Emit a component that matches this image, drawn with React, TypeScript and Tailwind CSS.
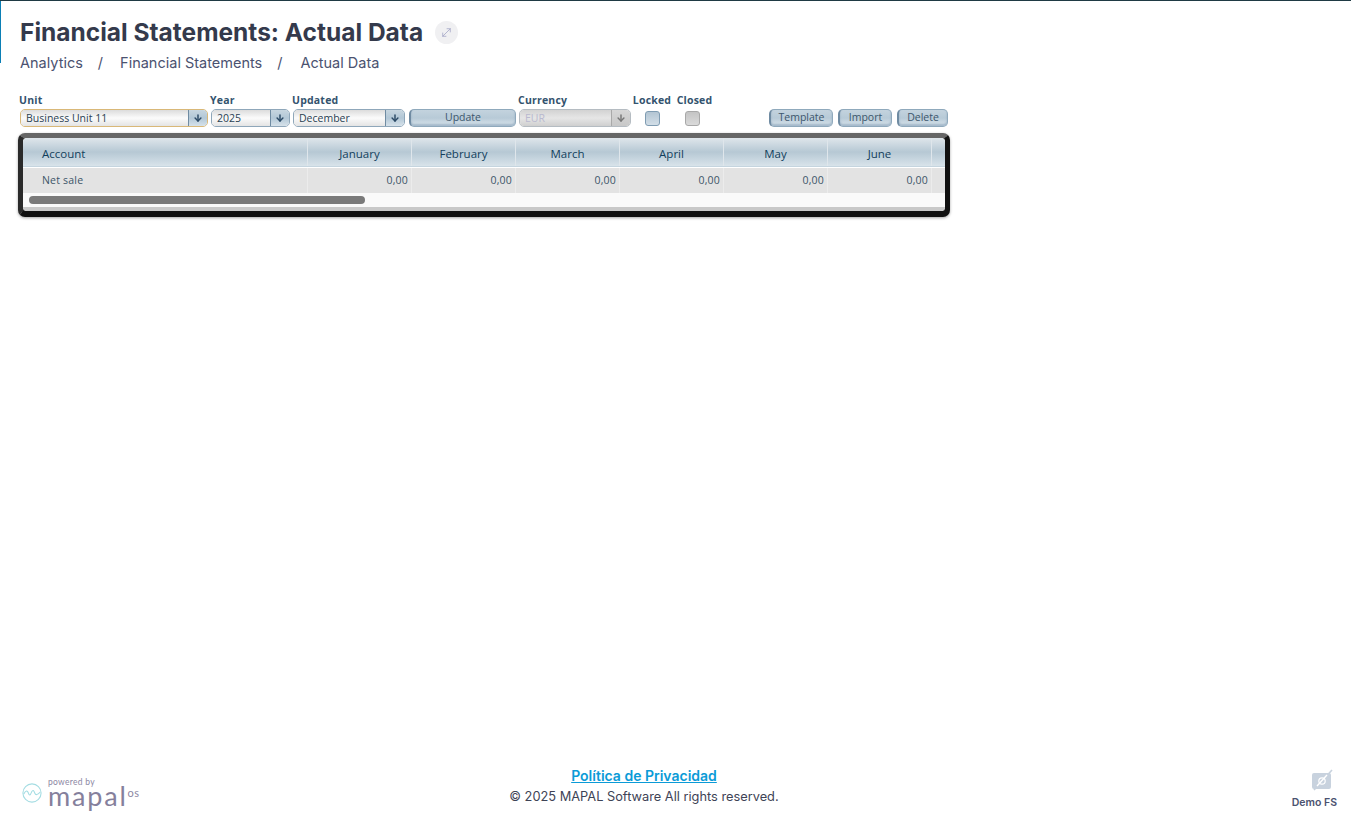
import { ArrowDown, MoveDiagonal } from 'lucide-react'

const months = ['January', 'February', 'March', 'April', 'May', 'June']

const Field = ({ label, width, value, disabled, focused }: { label: string; width: string; value: string; disabled?: boolean; focused?: boolean }) => (
    <div className={`flex flex-col ${width}`}>
        <span className="h-[15px] text-[10.5px] leading-[13px] font-bold tracking-[0.2px] text-[#33536e] -ml-px">{label}</span>
        <div className={`flex h-[18px] rounded-[5px] border overflow-hidden ${focused ? 'border-[#d9b878]' : disabled ? 'border-[#b5bcc2]' : 'border-[#8fa7ba]'}`}>
            <div className={`flex-1 pl-[5px] text-[10.5px] leading-[17px] ${disabled ? 'text-[#b9b9cf] bg-gradient-to-b from-[#d2d2d2] via-[#e6e6e6] to-[#cfcfcf]' : 'text-[#2a3f52] bg-gradient-to-b from-[#dcdcdc] via-[#fbfbfb] to-[#e4e4e4]'}`}>{value}</div>
            <div className={`w-[19px] flex items-center justify-center border-l ${disabled ? 'border-[#a9a9a9] bg-gradient-to-b from-[#d6d6d6] to-[#c8c8c8] text-[#777]' : 'border-[#6f8ba2] bg-gradient-to-b from-[#c7d6e0] via-[#b2c7d6] to-[#d6e2ea] text-[#2b4a66]'}`}>
                <ArrowDown size={10} strokeWidth={3.5} />
            </div>
        </div>
    </div>
)

const Btn = ({ children, width }: { children: string; width: string }) => (
    <button className={`${width} h-[18px] rounded-[5px] border border-[#8fa9bc] border-l-[2px] border-l-[#6f8ba2] bg-gradient-to-b from-[#c3d3de] via-[#b7cad7] to-[#dce6ed] shadow-[inset_0_-2px_2px_rgba(120,150,175,0.55)] text-[10.5px] leading-[14px] pb-[2px] text-[#3c566c]`}>
        {children}
    </button>
)

const Check = ({ gray }: { gray?: boolean }) => (
    <div className={`w-[15px] h-[15px] mb-px rounded-[3px] border ${gray ? 'border-[#a8a8a8] bg-gradient-to-b from-[#c4c4c4] to-[#dadada]' : 'border-[#7f9cb2] bg-gradient-to-b from-[#b3c5d3] to-[#d2dee7]'}`} />
)

const App = () => {
    return (
        <div className="relative flex flex-col h-[813px] bg-white border-t border-[#1f3a44] font-['Open_Sans',sans-serif] overflow-hidden">
            <div className="absolute left-0 top-0 w-px h-[62px] bg-[#0b7fb5]" />

            <div className="pl-5 pt-[15px]">
                <div className="flex items-center h-[32px]">
                    <h1 className="font-['Inter',sans-serif] font-bold text-[24.5px] text-[#343a4c]">Financial Statements: Actual Data</h1>
                    <div className="ml-3 w-[23px] h-[23px] rounded-full bg-[#f0f0f2] flex items-center justify-center text-[#a5a8c8]">
                        <MoveDiagonal size={13} strokeWidth={1.5} />
                    </div>
                </div>
                <div className="flex items-center mt-[3px] h-[24px] font-['Inter',sans-serif] text-[14.5px] text-[#4b5270]">
                    <span>Analytics</span>
                    <span className="ml-[15px] mr-[17px]">/</span>
                    <span>Financial Statements</span>
                    <span className="ml-[15px] mr-[18px]">/</span>
                    <span>Actual Data</span>
                </div>
            </div>

            <div className="flex items-end pl-5 mt-[19px] h-[33px]">
                <Field label="Unit" width="w-[188px]" value="Business Unit 11" focused />
                <div className="ml-[3px]"><Field label="Year" width="w-[79px]" value="2025" /></div>
                <div className="ml-[3px]"><Field label="Updated" width="w-[112px]" value="December" /></div>
                <div className="ml-[4px]"><Btn width="w-[107px]">Update</Btn></div>
                <div className="ml-[3px]"><Field label="Currency" width="w-[112px]" value="EUR" disabled /></div>
                <div className="ml-px w-[40px] flex flex-col items-center">
                    <span className="h-[17px] text-[10.5px] leading-[13px] font-bold tracking-[0.2px] text-[#33536e]">Locked</span>
                    <Check />
                </div>
                <div className="w-[40px] flex flex-col items-center">
                    <span className="h-[17px] ml-[5px] text-[10.5px] leading-[13px] font-bold tracking-[0.2px] text-[#33536e]">Closed</span>
                    <Check gray />
                </div>
                <div className="ml-[57px]"><Btn width="w-[64px]">Template</Btn></div>
                <div className="ml-[5px]"><Btn width="w-[54px]">Import</Btn></div>
                <div className="ml-[5px]"><Btn width="w-[51px]">Delete</Btn></div>
            </div>

            <div className="ml-[18px] mt-[6px] w-[932px] h-[84px] rounded-[7px] border-t-[5px] border-t-[#666] border-x-[5px] border-l-[#2a2a2a] border-r-[#111] border-b-[6px] border-b-[#111] bg-[#333] shadow-[0_1px_3px_rgba(0,0,0,0.35)]">
                <div className="h-full rounded-[4px] overflow-hidden bg-white">
                    <div className="flex h-[29px] bg-gradient-to-b from-[#dfe6eb] via-[#b6c8d4] to-[#d8e3ea] border-b border-[#c5d5df] text-[11.5px] text-[#123f5c] leading-[27px]">
                        <div className="w-[285px] pl-[19px] pt-[2px] border-r border-[#dfe6eb]">Account</div>
                        {months.map((m) => (
                            <div key={m} className="w-[104px] pt-[2px] text-center border-r border-[#dfe6eb]">{m}</div>
                        ))}
                    </div>
                    <div className="flex h-[25px] mt-[1px] bg-[#e3e3e3] text-[10.5px] tracking-[0.2px] text-[#3c5568] leading-[24px]">
                        <div className="w-[285px] pl-[19px] border-r border-[#ececec]">Net sale</div>
                        {months.map((m) => (
                            <div key={m} className="w-[104px] text-right pr-[3px] border-r border-[#ececec]">0,00</div>
                        ))}
                    </div>
                    <div className="h-[14px] bg-[#fafafa] pt-[3px] pl-[6px]">
                        <div className="w-[336px] h-[8px] rounded-full bg-[#7a7a7a]" />
                    </div>
                    <div className="h-[5px] bg-[#c9c9c9]" />
                </div>
            </div>

            <div className="flex mt-auto h-[55px]">
                <div className="ml-[22px] w-[118px] flex items-start pt-[25px]">
                    <svg viewBox="0 0 22 22" className="w-[20px] h-[20px] shrink-0 text-[#a5dde3]" fill="none" stroke="currentColor" strokeWidth="1.2">
                        <circle cx="11" cy="11" r="10" />
                        <path d="M2 12 C4 8 6 8 7 11 C8 14 9 14 10.5 10 C12 7 13 8 14 11 C15 14 17 13 20 10" />
                    </svg>
                    <div className="flex flex-col ml-[6px] -mt-[5px] font-['Lato',sans-serif] text-[#8c87a3]">
                        <span className="h-[8px] text-[8.5px] leading-[8px] tracking-[0.3px]">powered by</span>
                        <div className="flex items-start h-[24px] -mt-[2px]">
                            <span className="text-[27px] leading-[24px] tracking-[1.8px] text-[#85809c]">mapal</span>
                            <span className="text-[11px] leading-[12px] tracking-[0.4px] mt-[3px]">os</span>
                        </div>
                    </div>
                </div>
                <div className="ml-[354px] w-[300px] flex flex-col items-center font-['Inter',sans-serif]">
                    <a className="mt-[8px] text-[14px] leading-[20px] font-semibold text-[#0b9bd7] underline">Política de Privacidad</a>
                    <span className="mt-px text-[12.8px] leading-[20px] text-[#3e4356]">© 2025 MAPAL Software All rights reserved.</span>
                </div>
                <div className="ml-auto mr-[14px] flex flex-col items-end">
                    <svg viewBox="0 0 22 22" className="w-[22px] h-[22px] mr-[4px] mt-[11px]">
                        <rect x="1" y="4" width="19" height="16" rx="2" fill="#c8d2de" />
                        <path d="M3 21 L21 1" stroke="#c8d2de" strokeWidth="1.6" />
                        <path d="M6 17 L16 6" stroke="#fff" strokeWidth="1.4" />
                        <circle cx="11" cy="12" r="3.2" fill="none" stroke="#fff" strokeWidth="1.2" />
                    </svg>
                    <span className="mt-[5px] font-['Inter',sans-serif] text-[10.5px] leading-[14px] font-semibold text-[#4b5270]">Demo FS</span>
                </div>
            </div>
        </div>
    )
}

export default App
